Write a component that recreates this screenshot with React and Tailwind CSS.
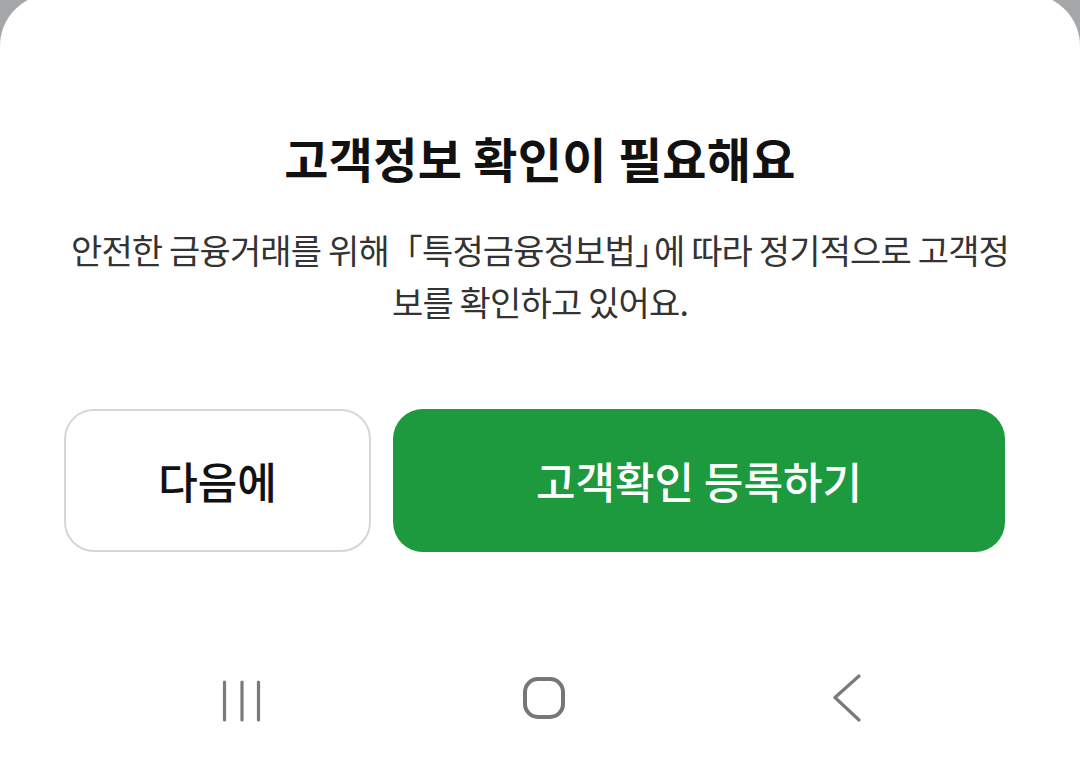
const KR = { fontFamily: '"Noto Sans CJK KR", "Noto Sans", sans-serif' };

const NavBar = () => (
  <div className="flex items-center h-[60px] mt-[118px]">
    <div className="w-[1080px] relative h-[60px]">
      <svg className="absolute left-[218px] top-[6px]" width="48" height="48" viewBox="0 0 48 48">
        <g stroke="#7a7a7a" strokeWidth="3.2" strokeLinecap="round">
          <line x1="6.5" y1="6" x2="6.5" y2="44" />
          <line x1="24" y1="6" x2="24" y2="44" />
          <line x1="40.5" y1="6" x2="40.5" y2="44" />
        </g>
      </svg>
      <svg className="absolute left-[520px] top-[4px]" width="48" height="48" viewBox="0 0 48 48">
        <rect x="5" y="5" width="38" height="38" rx="13" fill="none" stroke="#767676" strokeWidth="4" />
      </svg>
      <svg className="absolute left-[828px] top-[4px]" width="40" height="48" viewBox="0 0 40 48">
        <polyline points="31,4 7,25.5 31,48" transform="translate(0,-2)" fill="none" stroke="#7a7a7a" strokeWidth="3.2" strokeLinecap="round" strokeLinejoin="round" />
      </svg>
    </div>
  </div>
);

const App = () => {
  return (
    <div className="w-[1080px] h-[758px] bg-[#a4a6a8] overflow-hidden" style={KR}>
      <div className="bg-white rounded-t-[52px] h-[764px] -mt-[6px] pt-[134px]">
        <h1 className="text-center text-[48px] leading-[58px] font-bold text-[#111] tracking-[0.3px]">
          고객정보 확인이 필요해요
        </h1>
        <p className="mt-[38px] text-center text-[34px] leading-[52px] text-[#333] tracking-[-0.85px] whitespace-nowrap">
          안전한 금융거래를 위해「특정금융정보법<span className="tracking-[-15px]">」</span>에 따라 정기적으로 고객정
          <br />
          보를 확인하고 있어요.
        </p>
        <div className="flex gap-[22px] pl-[64px] pr-[75px] mt-[81px]">
          <button className="w-[307px] h-[143px] rounded-[30px] border-2 border-[#d6d6d6] bg-white text-[43px] font-medium text-[#111]">
            다음에
          </button>
          <button className="flex-1 h-[143px] rounded-[30px] bg-[#1d9a3e] text-[43px] font-medium text-white">
            고객확인 등록하기
          </button>
        </div>
        <NavBar />
      </div>
    </div>
  );
};

export default App;
